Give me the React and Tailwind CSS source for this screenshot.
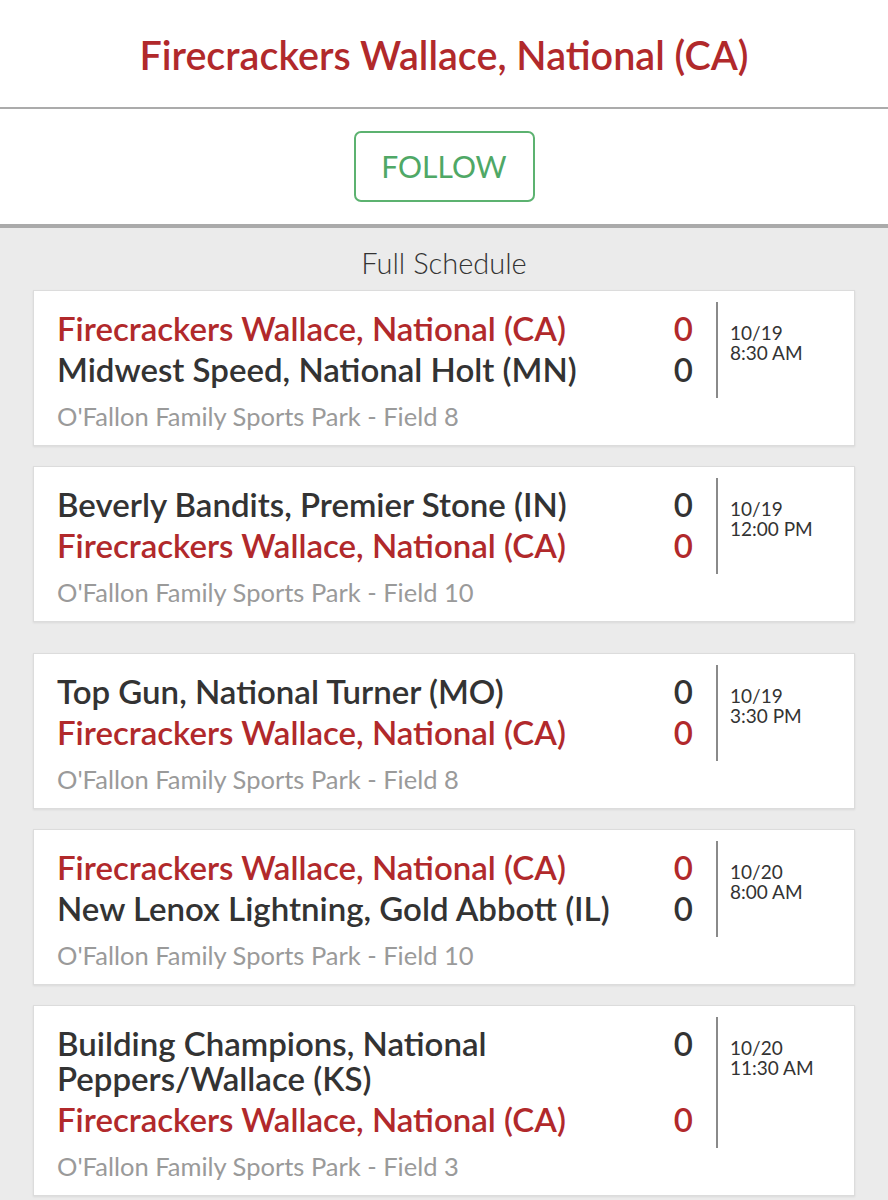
import React from 'react'

const TEAM = 'Firecrackers Wallace, National (CA)'

const GAMES = [
  { home: TEAM, away: 'Midwest Speed, National Holt (MN)', mine: 0, date: '10/19', time: '8:30 AM', field: 'Field 8' },
  { home: 'Beverly Bandits, Premier Stone (IN)', away: TEAM, mine: 1, date: '10/19', time: '12:00 PM', field: 'Field 10', gap: true },
  { home: 'Top Gun, National Turner (MO)', away: TEAM, mine: 1, date: '10/19', time: '3:30 PM', field: 'Field 8' },
  { home: TEAM, away: 'New Lenox Lightning, Gold Abbott (IL)', mine: 0, date: '10/20', time: '8:00 AM', field: 'Field 10' },
  { home: 'Building Champions, National Peppers/Wallace (KS)', away: TEAM, mine: 1, date: '10/20', time: '11:30 AM', field: 'Field 3' },
]

function Row({ name, score, highlight }) {
  return (
    <div className={`flex items-start text-[33px] leading-[35px] font-semibold ${highlight ? 'text-[#b1292b]' : 'text-[#333333]'}`}>
      <div className="flex-1 pr-[40px]">{name}</div>
      <div>{score}</div>
    </div>
  )
}

function GameCard({ game }) {
  return (
    <div
      className={`bg-white border border-[#dcdcdc] shadow-[0_1px_2px_rgba(0,0,0,0.08)] pt-[11px] pb-[14px] px-[23px] ${
        game.gap ? 'mb-[31px]' : 'mb-[20px]'
      }`}
    >
      <div className="flex">
        <div className="flex-1 pt-[9px] pb-[11px] pr-[23px] flex flex-col gap-[6px]">
          <Row name={game.home} score={0} highlight={game.mine === 0} />
          <Row name={game.away} score={0} highlight={game.mine === 1} />
        </div>
        <div className="w-[2px] bg-[#8a8a8a]" />
        <div className="w-[113px] pl-[12px] pt-[21px] text-[19px] leading-[20px] text-[#333333]">
          <div>{game.date}</div>
          <div>{game.time}</div>
        </div>
      </div>
      <div className="mt-[3px] text-[25.5px] leading-[30px] text-[#9a9a9a]">
        O'Fallon Family Sports Park - {game.field}
      </div>
    </div>
  )
}

export default function App() {
  return (
    <div className="min-h-[1200px] bg-[#ebebeb] font-['Lato','Liberation_Sans',sans-serif]">
      <header className="h-[107px] bg-white flex items-center justify-center border-b-2 border-[#ababab] box-content">
        <h1 className="pt-[3px] text-[39.5px] font-semibold text-[#b1292b]">{TEAM}</h1>
      </header>
      <div className="bg-white pt-[22px] pb-[22px] flex justify-center border-b-4 border-[#aaaaaa]">
        <button className="w-[181px] h-[71px] border-2 border-[#5cb270] rounded-[7px] text-[30px] text-[#4fa866]">
          FOLLOW
        </button>
      </div>
      <div className="pt-[18px] text-center text-[29px] leading-[34px] font-light text-[#333333]">Full Schedule</div>
      <div className="mt-[10px] mx-[33px]">
        {GAMES.map((g, i) => (
          <GameCard key={i} game={g} />
        ))}
      </div>
    </div>
  )
}
